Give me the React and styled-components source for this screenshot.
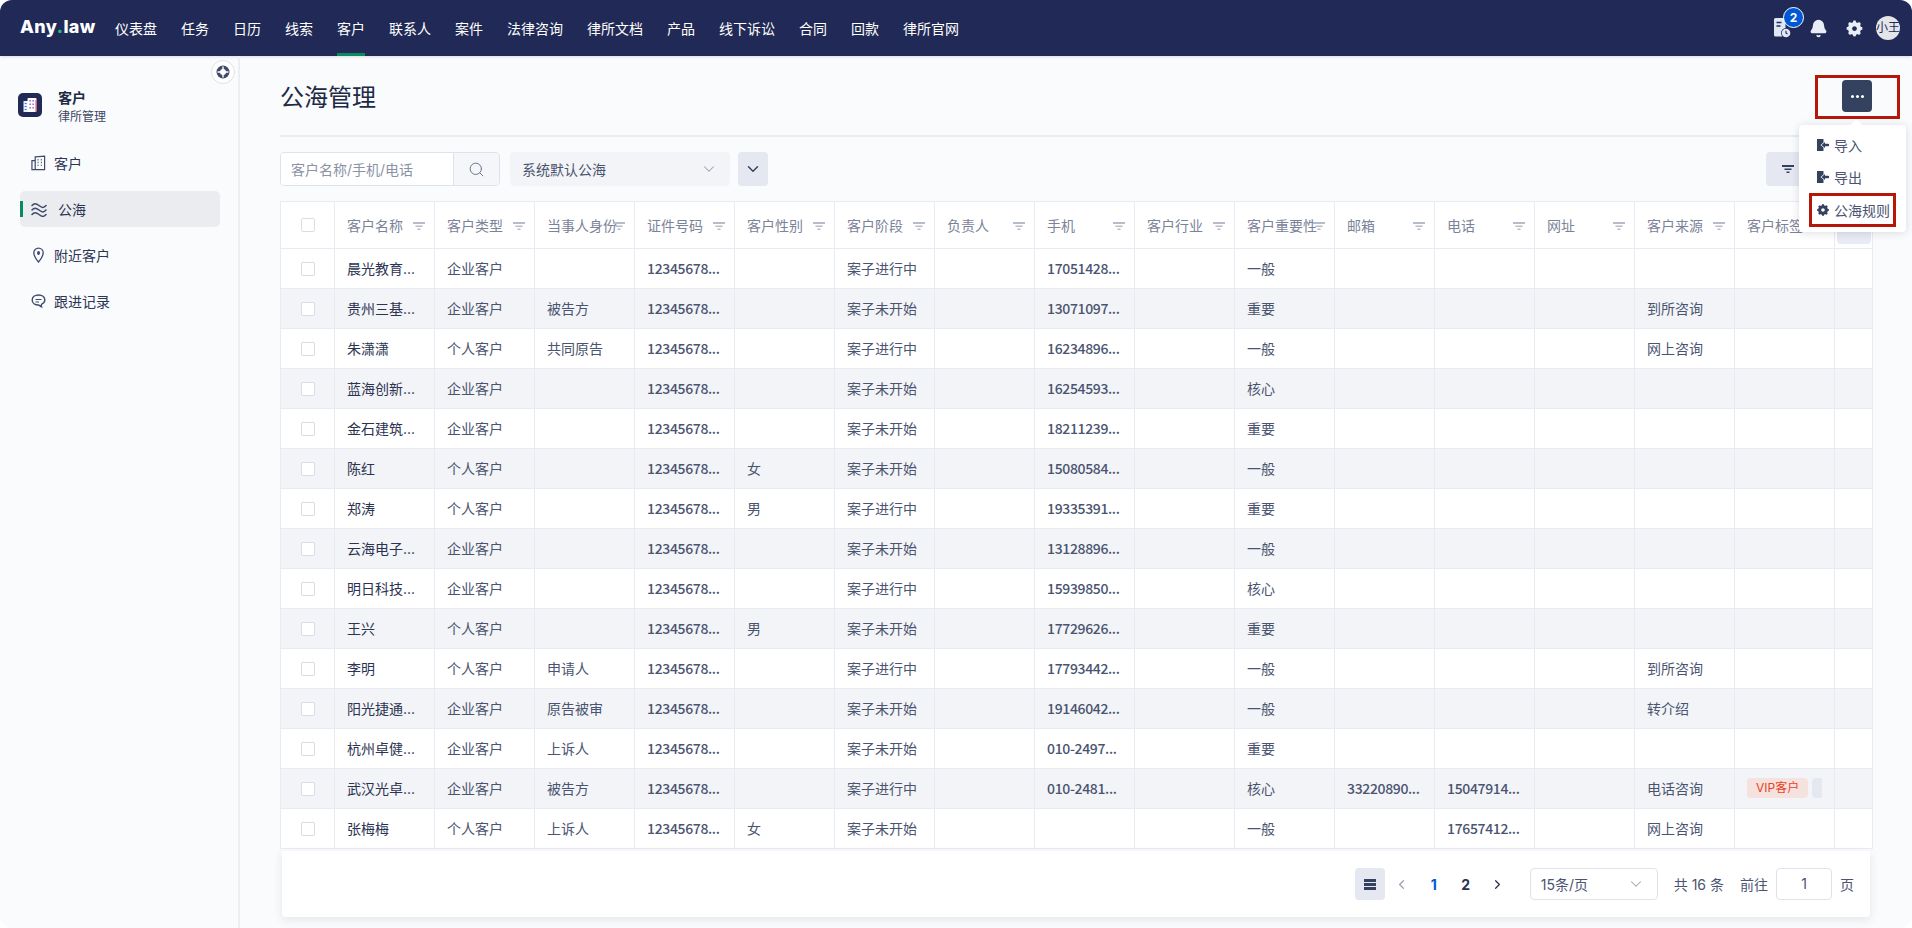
import React from "react";
import styled, { createGlobalStyle } from "styled-components";
import { Search, ChevronDown, ChevronLeft, ChevronRight, Bell } from "lucide-react";
import { RiSettings5Fill } from "react-icons/ri";

const GlobalStyle = createGlobalStyle`
  html, body {
    margin: 0;
    padding: 0;
    background: #fff;
    overflow: hidden;
  }
  * {
    box-sizing: border-box;
  }
  body {
    font-family: Inter, "Noto Sans CJK SC", sans-serif;
    font-size: 14px;
    color: #4a5470;
  }
`;

const Page = styled.div`
  width: 1912px;
  height: 928px;
  background: #fafbfd;
  border-radius: 12px;
  overflow: hidden;
  display: flex;
  flex-direction: column;
`;

const TopBar = styled.header`
  height: 56px;
  flex: none;
  background: #212a56;
  display: flex;
  align-items: stretch;
  padding: 0 12px 0 20px;
  box-shadow: 0 1px 3px rgba(33, 42, 86, 0.15);
`;

const Logo = styled.div`
  width: 75px;
  margin-right: 20px;
  align-self: center;
  color: #fff;
  font-size: 18px;
  font-weight: 800;
  letter-spacing: 0.4px;
  margin-top: -4px;
  white-space: nowrap;
  span {
    color: #14c586;
  }
`;

const TopNav = styled.nav`
  display: flex;
  gap: 24px;
  flex: 1;
`;

const TopLink = styled.a`
  display: flex;
  align-items: center;
  color: #fff;
  font-size: 14px;
  border-bottom: 3px solid ${props => (props.$active ? "#0a8a5c" : "transparent")};
  border-top: 3px solid transparent;
`;

const TopIcons = styled.div`
  display: flex;
  align-items: center;
`;

const IconSlot = styled.div`
  position: relative;
  width: 36px;
  height: 24px;
  display: flex;
  align-items: center;
  justify-content: center;
  color: #e9edf5;
`;

const Badge = styled.span`
  position: absolute;
  top: -9px;
  left: 19px;
  width: 21px;
  height: 21px;
  border-radius: 50%;
  border: 1.5px solid #fff;
  background: #0058d4;
  color: #fff;
  font-size: 12px;
  font-weight: 700;
  display: flex;
  align-items: center;
  justify-content: center;
`;

const Avatar = styled.div`
  width: 24px;
  height: 24px;
  margin-left: 4px;
  border-radius: 50%;
  background: #e4e5ea;
  color: #212a56;
  font-size: 12px;
  line-height: 24px;
  text-align: center;
  white-space: nowrap;
`;

const Body = styled.div`
  flex: 1;
  display: flex;
  min-height: 0;
`;

const Sidebar = styled.aside`
  position: relative;
  width: 240px;
  flex: none;
  border-right: 2px solid #eceef3;
  padding: 37px 18px 0 20px;
`;

const Collapse = styled.button`
  position: absolute;
  top: 4px;
  right: 3px;
  width: 24px;
  height: 24px;
  padding: 0;
  border-radius: 50%;
  border: 1px solid #dde0e8;
  background: #fff;
  display: flex;
  align-items: center;
  justify-content: center;
`;

const SideHead = styled.div`
  display: flex;
  gap: 16px;
  margin-left: -2px;
  height: 52px;
`;

const SideLogo = styled.div`
  width: 24px;
  height: 24px;
  border-radius: 5px;
  background: #212a56;
  display: flex;
  align-items: center;
  justify-content: center;
`;

const SideTitle = styled.div`
  margin-top: -5px;
  font-size: 14px;
  font-weight: 700;
  line-height: 20px;
  color: #212a44;
`;

const SideSub = styled.div`
  font-size: 12px;
  line-height: 18px;
  color: #3d4663;
`;

const SideNav = styled.div`
  display: flex;
  flex-direction: column;
  gap: 10px;
`;

const SideItem = styled.a`
  position: relative;
  height: 36px;
  display: flex;
  align-items: center;
  gap: ${props => (props.$active ? "11px" : "8px")};
  padding-left: 11px;
  border-radius: 5px;
  background: ${props => (props.$active ? "#ebecf0" : "transparent")};
  color: #2c3553;
  font-size: 14px;
  svg {
    flex: none;
    color: #3d4a6b;
  }
  ${props =>
    props.$active &&
    `
    &::before {
      content: "";
      position: absolute;
      left: 0;
      top: 10px;
      width: 3px;
      height: 16px;
      background: #0a8a5c;
    }
  `}
`;

const Main = styled.main`
  flex: 1;
  min-width: 0;
  padding: 0 40px;
`;

const PageHead = styled.div`
  height: 81px;
  padding-top: 24px;
  display: flex;
  justify-content: space-between;
  border-bottom: 2px solid #e9ebf1;
`;

const Title = styled.h1`
  margin: 0;
  font-size: 24px;
  font-weight: 400;
  line-height: 36px;
  color: #212a44;
`;

const MoreWrap = styled.div`
  position: relative;
  width: 30px;
  height: 32px;
`;

const MoreButton = styled.button`
  width: 30px;
  height: 32px;
  padding: 0;
  border: 0;
  border-radius: 4px;
  background: #35425f;
  display: flex;
  align-items: center;
  justify-content: center;
  gap: 2px;
  i {
    width: 3px;
    height: 3px;
    border-radius: 50%;
    background: #fff;
  }
`;

const Mark = styled.div`
  position: absolute;
  top: -5px;
  left: -27px;
  right: -28px;
  bottom: -7px;
  border: 3px solid #b5170b;
  pointer-events: none;
`;

const Menu = styled.div`
  position: absolute;
  z-index: 5;
  top: 45px;
  right: -34px;
  width: 107px;
  padding: 4px 10px 5px;
  background: #fff;
  border-radius: 4px;
  box-shadow: 0 1px 8px rgba(40, 50, 80, 0.16);
  &::before {
    content: "";
    position: absolute;
    top: -4px;
    left: 53px;
    width: 9px;
    height: 9px;
    background: #fff;
    transform: rotate(45deg);
  }
`;

const MenuItem = styled.div`
  position: relative;
  height: ${props => (props.$marked ? "34px" : "32px")};
  display: flex;
  align-items: center;
  gap: 4px;
  padding-left: ${props => (props.$marked ? "4px" : "7px")};
  border: ${props => (props.$marked ? "3px solid #b5170b" : "0")};
  color: #4a5470;
  white-space: nowrap;
  svg {
    flex: none;
    color: #35425f;
  }
`;

const FilterRow = styled.div`
  margin-top: 15px;
  height: 34px;
  display: flex;
  align-items: stretch;
`;

const SearchBox = styled.div`
  width: 220px;
  display: flex;
  border: 1px solid #dfe2ea;
  border-radius: 4px;
  overflow: hidden;
  background: #fff;
`;

const SearchInput = styled.input`
  flex: 1;
  min-width: 0;
  border: 0;
  outline: 0;
  padding: 0 10px;
  font: inherit;
  color: #4a5470;
  &::placeholder {
    color: #8b92a5;
    opacity: 1;
  }
`;

const SearchButton = styled.div`
  width: 46px;
  background: #f5f6f9;
  border-left: 1px solid #dfe2ea;
  display: flex;
  align-items: center;
  justify-content: center;
  color: #6d768d;
`;

const PlainSelect = styled.div`
  width: 220px;
  margin-left: 10px;
  padding: 0 12px;
  background: #f3f4f7;
  border-radius: 4px;
  display: flex;
  align-items: center;
  justify-content: space-between;
  color: #4a5470;
  svg {
    color: #9aa1b2;
  }
`;

const SquareButton = styled.div`
  width: 30px;
  margin-left: 8px;
  background: #e5e8f1;
  border-radius: 4px;
  display: flex;
  align-items: center;
  justify-content: center;
  color: #35425f;
`;

const WideButton = styled.div`
  margin-left: auto;
  width: 106px;
  padding-left: 16px;
  background: #e5e8f1;
  border-radius: 4px;
  display: flex;
  align-items: center;
`;

const Table = styled.table`
  margin-top: 15px;
  width: 1592px;
  table-layout: fixed;
  border-collapse: collapse;
  background: #fff;
`;

const Th = styled.th`
  position: relative;
  height: 47px;
  padding: 0 12px;
  border: 1px solid #e9ebf3;
  font-weight: 400;
  text-align: left;
  color: #7b8398;
  white-space: nowrap;
`;

const Td = styled.td`
  height: 40px;
  padding: 0 12px 2px;
  border: 1px solid #e9ebf3;
  color: ${props => (props.$strong ? "#2b3352" : "#4a5470")};
  white-space: nowrap;
  overflow: hidden;
`;

const CheckTd = styled(Td)`
  padding: 0 12px;
`;

const NumTd = styled(Td)`
  font-family: "Noto Sans CJK SC", sans-serif;
  font-weight: 500;
  letter-spacing: -0.35px;
`;

const Row = styled.tr`
  background: ${props => (props.$alt ? "#f3f4f7" : "#fff")};
`;

const Check = styled.input.attrs({ type: "checkbox" })`
  appearance: none;
  display: block;
  margin: 0 auto;
  width: 14px;
  height: 14px;
  background: #fff;
  border: 1px solid #d9dce5;
  border-radius: 2px;
`;

const FilterMark = styled.svg`
  position: absolute;
  top: 19px;
  right: 9px;
`;

const ActionHead = styled.div`
  width: 34px;
  height: 38px;
  margin-left: -10px;
  background: #e8ebf3;
  border-radius: 4px;
`;

const Tags = styled.div`
  display: flex;
  gap: 4px;
  overflow: hidden;
`;

const Tag = styled.span`
  flex: none;
  height: 20px;
  min-width: 30px;
  padding: 0 9px;
  border-radius: 4px;
  font-size: 12px;
  line-height: 20px;
  background: ${props => (props.$red ? "#f5e1de" : "#e3e8f1")};
  color: ${props => (props.$red ? "#e8431f" : "#4a5470")};
`;

const Footer = styled.div`
  width: 1588px;
  height: 66px;
  margin: 2px 0 0 2px;
  background: #fff;
  border-radius: 0 0 4px 4px;
  box-shadow: 0 3px 10px rgba(40, 50, 80, 0.1);
  display: flex;
  align-items: center;
  justify-content: flex-end;
  padding-right: 16px;
  color: #4a5470;
`;

const ListToggle = styled.div`
  width: 30px;
  height: 32px;
  margin-right: 1px;
  border-radius: 4px;
  background: #e5e8f1;
  display: flex;
  flex-direction: column;
  align-items: center;
  justify-content: center;
  gap: 1px;
  i {
    width: 12px;
    height: 3px;
    background: #35425f;
  }
`;

const PageNum = styled.div`
  width: 32px;
  height: 32px;
  display: flex;
  align-items: center;
  justify-content: center;
  font-weight: 700;
  font-size: 14px;
  color: ${props => (props.$active ? "#0058d4" : "#2b3352")};
  svg {
    color: ${props => (props.$muted ? "#9aa1b2" : "#2b3352")};
  }
`;

const SizeSelect = styled.div`
  width: 128px;
  height: 32px;
  margin-left: 16px;
  padding: 0 12px 0 10px;
  border: 1px solid #dfe2ea;
  border-radius: 4px;
  display: flex;
  align-items: center;
  justify-content: space-between;
  svg {
    color: #9aa1b2;
  }
`;

const Total = styled.span`
  margin-left: 16px;
`;

const Jump = styled.span`
  margin-left: 16px;
`;

const JumpInput = styled.div`
  width: 56px;
  height: 32px;
  margin: 0 8px;
  border: 1px solid #dfe2ea;
  border-radius: 4px;
  text-align: center;
  line-height: 30px;
`;

const topLinks = ["仪表盘", "任务", "日历", "线索", "客户", "联系人", "案件", "法律咨询", "律所文档", "产品", "线下诉讼", "合同", "回款", "律所官网"];

const columns = ["客户名称", "客户类型", "当事人身份", "证件号码", "客户性别", "客户阶段", "负责人", "手机", "客户行业", "客户重要性", "邮箱", "电话", "网址", "客户来源", "客户标签"];

const ID = "12345678...";
const GOING = "案子进行中";
const WAIT = "案子未开始";

// name, type, role, gender, stage, mobile, level, mail, phone, source, tags
const customers = [
  ["晨光教育...", "企业客户", "", "", GOING, "17051428...", "一般"],
  ["贵州三基...", "企业客户", "被告方", "", WAIT, "13071097...", "重要", "", "", "到所咨询"],
  ["朱潇潇", "个人客户", "共同原告", "", GOING, "16234896...", "一般", "", "", "网上咨询"],
  ["蓝海创新...", "企业客户", "", "", WAIT, "16254593...", "核心"],
  ["金石建筑...", "企业客户", "", "", WAIT, "18211239...", "重要"],
  ["陈红", "个人客户", "", "女", WAIT, "15080584...", "一般"],
  ["郑涛", "个人客户", "", "男", GOING, "19335391...", "重要"],
  ["云海电子...", "企业客户", "", "", WAIT, "13128896...", "一般"],
  ["明日科技...", "企业客户", "", "", GOING, "15939850...", "核心"],
  ["王兴", "个人客户", "", "男", WAIT, "17729626...", "重要"],
  ["李明", "个人客户", "申请人", "", GOING, "17793442...", "一般", "", "", "到所咨询"],
  ["阳光捷通...", "企业客户", "原告被审", "", WAIT, "19146042...", "一般", "", "", "转介绍"],
  ["杭州卓健...", "企业客户", "上诉人", "", WAIT, "010-2497...", "重要"],
  ["武汉光卓...", "企业客户", "被告方", "", GOING, "010-2481...", "核心", "33220890...", "15047914...", "电话咨询", true],
  ["张梅梅", "个人客户", "上诉人", "女", WAIT, "", "一般", "", "17657412...", "网上咨询"]
];

const FileClock = () => (
  <svg width="18" height="20" viewBox="0 0 18 20" fill="none">
    <path d="M1 1.5A1.5 1.5 0 0 1 2.5 0H11a1.5 1.5 0 0 1 1.5 1.5V10a5 5 0 0 0-3 8.500H2.500A1.500 1.500 0 0 1 1 17z" fill="#dfe7f5" />
    <path d="M3.500 4.500h5M3.500 8h4" stroke="#212a56" strokeWidth="1.300" />
    <circle cx="13" cy="15" r="4.300" fill="#dfe7f5" />
    <path d="M13 12.700V15l1.500 1" stroke="#212a56" strokeWidth="1.100" />
  </svg>
);

const FilterIcon = ({ color = "#b7bcc9", ...rest }) => (
  <svg width="12" height="10" viewBox="0 0 12 10" {...rest}>
    <path d="M0 1h12v2H0zM2.500 4.500h7v1.500h-7zM4.500 7.500h3V9h-3z" fill={color} />
  </svg>
);

const CollapseIcon = () => (
  <svg width="14" height="14" viewBox="0 0 14 14">
    <circle cx="7" cy="7" r="6.500" fill="#3d4a6b" />
    <circle cx="7" cy="7" r="3" fill="#fff" />
    <path d="M6.300 1.500h1.400v11H6.300zM1.500 6.300h11v1.400h-11z" fill="#fff" />
  </svg>
);

const LogoBuilding = () => (
  <svg width="14" height="16" viewBox="0 0 14 16">
    <rect x="0.500" y="4" width="5" height="11" fill="#e6f0ff" />
    <rect x="4.500" y="1" width="9" height="14" rx="1" fill="#fff" />
    <path d="M6.500 3h1.200v1.500H6.500zM9.500 3h1.200v1.500H9.500zM6.500 6.500h1.200V8H6.500zM9.500 6.500h1.200V8H9.500zM6.500 10h1.200v1.500H6.500zM9.500 10h1.200v1.500H9.500z" fill="#7a3fd0" />
    <rect x="12.500" y="3" width="1" height="12" fill="#e0455a" />
    <path d="M1.700 6.500h2M1.700 9.500h2M1.700 12.500h2" stroke="#3f7be0" strokeWidth="1" />
  </svg>
);

const BuildingLine = () => (
  <svg width="15" height="16" viewBox="0 0 16 16" fill="none" stroke="currentColor" strokeWidth="1.300">
    <path d="M1 5.500h3.500V15H1zM4.500 1.500l10-.8V15h-10z" />
    <path d="M7 4.500h1M10.500 4.500h1M7 7.500h1M10.500 7.500h1M7 10.500h1M10.500 10.500h1" strokeWidth="1.500" />
  </svg>
);

const WavesIcon = () => (
  <svg width="16" height="15" viewBox="0 0 16 15" fill="none" stroke="currentColor" strokeWidth="1.500" strokeLinecap="round">
    <path d="M1 3.500c2-2.500 4-2.500 7 0s5 2.500 7 0" />
    <path d="M1 8c2-2.500 4-2.500 7 0s5 2.500 7 0" />
    <path d="M1 12.500c2-2.500 4-2.500 7 0s5 2.500 7 0" />
  </svg>
);

const PinIcon = () => (
  <svg width="15" height="16" viewBox="0 0 15 16" fill="none">
    <path d="M7.500 15C5 12 2.800 9.200 2.800 5.800a4.700 4.700 0 0 1 9.400 0C12.200 9.200 10 12 7.500 15z" stroke="currentColor" strokeWidth="1.300" />
    <ellipse cx="7.500" cy="6" rx="1.500" ry="2" fill="currentColor" />
  </svg>
);

const ChatIcon = () => (
  <svg width="15" height="16" viewBox="0 0 15 16" fill="none" stroke="currentColor" strokeWidth="1.400">
    <path d="M7.500 2C3.900 2 1.200 4 1.200 7s2.700 5 6.300 5c.8 0 1.400 1.300 3 1.800-.4-1-.3-2.200.3-2.700 1.800-.8 3-2.300 3-4.100 0-3-2.700-5-6.300-5z" />
    <path d="M4.500 6.500h6M4.500 9h3.500" strokeWidth="1.200" />
  </svg>
);

const DoorIcon = () => (
  <svg width="14" height="14" viewBox="0 0 14 14" fill="currentColor">
    <path d="M1 1h6.500v3.500L4.500 7l3 2.500V13H1z" />
    <path d="M5.500 7L9 4v1.800h3a1.200 1.200 0 0 1 0 2.400H9V10z" />
  </svg>
);

const App = () => (
  <Page>
    <GlobalStyle />
    <TopBar>
      <Logo>
        Any<span>.</span>law
      </Logo>
      <TopNav>
        {topLinks.map(link => (
          <TopLink key={link} $active={link === "客户"}>
            {link}
          </TopLink>
        ))}
      </TopNav>
      <TopIcons>
        <IconSlot>
          <FileClock />
          <Badge>2</Badge>
        </IconSlot>
        <IconSlot>
          <Bell size={19} fill="currentColor" />
        </IconSlot>
        <IconSlot>
          <RiSettings5Fill size={19} />
        </IconSlot>
        <Avatar>小王</Avatar>
      </TopIcons>
    </TopBar>
    <Body>
      <Sidebar>
        <Collapse>
          <CollapseIcon />
        </Collapse>
        <SideHead>
          <SideLogo>
            <LogoBuilding />
          </SideLogo>
          <div>
            <SideTitle>客户</SideTitle>
            <SideSub>律所管理</SideSub>
          </div>
        </SideHead>
        <SideNav>
          <SideItem>
            <BuildingLine />
            客户
          </SideItem>
          <SideItem $active>
            <WavesIcon />
            公海
          </SideItem>
          <SideItem>
            <PinIcon />
            附近客户
          </SideItem>
          <SideItem>
            <ChatIcon />
            跟进记录
          </SideItem>
        </SideNav>
      </Sidebar>
      <Main>
        <PageHead>
          <Title>公海管理</Title>
          <MoreWrap>
            <MoreButton>
              <i />
              <i />
              <i />
            </MoreButton>
            <Mark />
            <Menu>
              <MenuItem>
                <DoorIcon />
                导入
              </MenuItem>
              <MenuItem>
                <DoorIcon />
                导出
              </MenuItem>
              <MenuItem $marked>
                <RiSettings5Fill size={14} />
                公海规则
              </MenuItem>
            </Menu>
          </MoreWrap>
        </PageHead>
        <FilterRow>
          <SearchBox>
            <SearchInput placeholder="客户名称/手机/电话" />
            <SearchButton>
              <Search size={17} strokeWidth={1.4} />
            </SearchButton>
          </SearchBox>
          <PlainSelect>
            系统默认公海
            <ChevronDown size={18} strokeWidth={1.4} />
          </PlainSelect>
          <SquareButton>
            <ChevronDown size={18} />
          </SquareButton>
          <WideButton>
            <FilterIcon color="#35425f" />
          </WideButton>
        </FilterRow>
        <Table>
          <colgroup>
            <col width="54" />
            {columns.map(column => (
              <col key={column} width="100" />
            ))}
            <col width="38" />
          </colgroup>
          <thead>
            <tr>
              <Th>
                <Check />
              </Th>
              {columns.map(column => (
                <Th key={column}>
                  {column}
                  <FilterMark as={FilterIcon} />
                </Th>
              ))}
              <Th>
                <ActionHead />
              </Th>
            </tr>
          </thead>
          <tbody>
            {customers.map((c, index) => (
              <Row key={c[0]} $alt={index % 2 === 1}>
                <CheckTd>
                  <Check />
                </CheckTd>
                <Td $strong>{c[0]}</Td>
                <Td>{c[1]}</Td>
                <Td>{c[2]}</Td>
                <NumTd>{ID}</NumTd>
                <Td>{c[3]}</Td>
                <Td>{c[4]}</Td>
                <Td />
                <NumTd>{c[5]}</NumTd>
                <Td />
                <Td>{c[6]}</Td>
                <NumTd>{c[7]}</NumTd>
                <NumTd>{c[8]}</NumTd>
                <Td />
                <Td>{c[9]}</Td>
                <Td>
                  {c[10] && (
                    <Tags>
                      <Tag $red>VIP客户</Tag>
                      <Tag />
                    </Tags>
                  )}
                </Td>
                <Td />
              </Row>
            ))}
          </tbody>
        </Table>
        <Footer>
          <ListToggle>
            <i />
            <i />
            <i />
          </ListToggle>
          <PageNum $muted>
            <ChevronLeft size={15} />
          </PageNum>
          <PageNum $active>1</PageNum>
          <PageNum>2</PageNum>
          <PageNum>
            <ChevronRight size={15} />
          </PageNum>
          <SizeSelect>
            15条/页
            <ChevronDown size={18} strokeWidth={1.4} />
          </SizeSelect>
          <Total>共 16 条</Total>
          <Jump>前往</Jump>
          <JumpInput>1</JumpInput>
          <span>页</span>
        </Footer>
      </Main>
    </Body>
  </Page>
);

export default App;
